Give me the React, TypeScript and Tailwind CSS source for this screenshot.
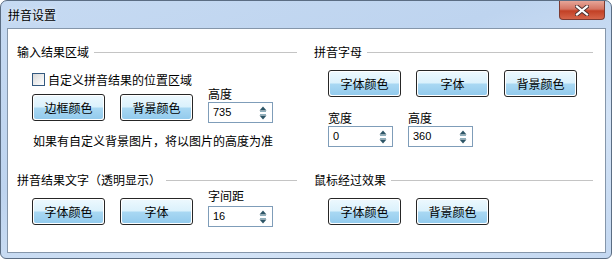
import React from 'react';

const cjk = { fontFamily: '"Noto Sans CJK SC", "Noto Sans", sans-serif' };

const WinButton: React.FC<{ label: string }> = ({ label }) => (
  <div className="w-[73px] h-[27px] shrink-0 rounded-[3px] border border-[#262626] bg-white p-px">
    <div className="flex h-full w-full items-center justify-center rounded-[2px] bg-[linear-gradient(to_bottom,#ecf8fe_0%,#daf1fc_48%,#a9d8f3_52%,#93cbed_100%)] text-[12px] leading-none text-black">
      {label}
    </div>
  </div>
);

const SpinBox: React.FC<{ value: string }> = ({ value }) => (
  <div className="flex h-[21px] w-[65px] items-center justify-between border border-[#7f9db9] bg-white pl-[4px] pr-[5px]">
    <span className="text-[11px] leading-none text-black" style={{ fontFamily: '"Liberation Sans", Arial, sans-serif' }}>
      {value}
    </span>
    <svg width="8" height="14" viewBox="0 0 8 14">
      <path d="M4 0.5 L7.5 4.5 L0.5 4.5 Z" fill="#2d5566" />
      <rect x="1" y="5" width="6" height="1" fill="#8fb0bd" />
      <rect x="1" y="8" width="6" height="1" fill="#8fb0bd" />
      <path d="M0.5 9.5 L7.5 9.5 L4 13.5 Z" fill="#2d5566" />
    </svg>
  </div>
);

const GroupHeader: React.FC<{ title: string }> = ({ title }) => (
  <div className="flex h-[14px] items-center">
    <span className="text-[12px] leading-[14px] text-black whitespace-nowrap">{title}</span>
    <div className="ml-[5px] h-px flex-1 bg-[#c4c4c4]" />
  </div>
);

export default function App() {
  return (
    <div className="h-[259px] w-[612px] bg-white" style={cjk}>
      <div className="flex h-[259px] w-[612px] flex-col rounded-t-[7px] rounded-b-[6px] border border-[#5b6d83] bg-[linear-gradient(160deg,#c6daf2_0%,#bed4ef_40%,#d3e3f6_70%,#c4d8f1_100%)]">
        {/* title bar */}
        <div className="flex h-[27px] items-start justify-between">
          <span className="ml-[7px] mt-[7px] text-[12px] leading-[14px] text-black [text-shadow:0_0_4px_#ffffff]">拼音设置</span>
          <div className="mr-[6px] flex h-[19px] w-[46px] items-center justify-center rounded-b-[4px] border border-t-0 border-[#7d3b32] bg-[linear-gradient(to_bottom,#e6a598_0%,#d47462_45%,#c24025_55%,#d6654a_100%)]">
            <svg width="14" height="11" viewBox="0 0 14 11">
              <path d="M2 1.5 L12 9.5 M12 1.5 L2 9.5" stroke="#4a3030" strokeWidth="4" strokeLinecap="square" />
              <path d="M2 1.5 L12 9.5 M12 1.5 L2 9.5" stroke="#ffffff" strokeWidth="2.2" strokeLinecap="square" />
            </svg>
          </div>
        </div>

        {/* client area */}
        <div className="ml-[6px] mr-[5px] h-[225px] border border-[#8596aa] bg-white pl-[9px] pt-[16px]">
          <div className="grid grid-cols-[280px_279px] grid-rows-[128px_auto] gap-x-[17px]">
            {/* 输入结果区域 */}
            <div className="flex flex-col">
              <GroupHeader title="输入结果区域" />
              <div className="flex flex-col pl-[15px]">
                <div className="mt-[14px] flex h-[13px] items-center">
                  <div className="h-[13px] w-[13px] border border-[#34597f] bg-[linear-gradient(135deg,#d8d8d8_0%,#f4f4f4_70%,#ffffff_100%)]" />
                  <span className="ml-[3px] text-[12px] leading-none text-black">自定义拼音结果的位置区域</span>
                </div>
                <div className="mt-[1px] flex items-start gap-[15px]">
                  <div className="mt-[7px]"><WinButton label="边框颜色" /></div>
                  <div className="mt-[7px]"><WinButton label="背景颜色" /></div>
                  <div className="flex flex-col">
                    <span className="text-[12px] leading-[14px] text-black">高度</span>
                    <div className="mt-[1px]"><SpinBox value="735" /></div>
                  </div>
                </div>
                <span className="mt-[11px] pl-px text-[12px] leading-[14px] text-black">如果有自定义背景图片，将以图片的高度为准</span>
              </div>
            </div>

            {/* 拼音字母 */}
            <div className="flex flex-col">
              <GroupHeader title="拼音字母" />
              <div className="flex flex-col pl-[14px]">
                <div className="mt-[11px] flex gap-[15px]">
                  <WinButton label="字体颜色" />
                  <WinButton label="字体" />
                  <WinButton label="背景颜色" />
                </div>
                <div className="mt-[14px] flex gap-[15px]">
                  <div className="flex flex-col">
                    <span className="text-[12px] leading-[14px] text-black">宽度</span>
                    <div className="mt-[1px]"><SpinBox value="0" /></div>
                  </div>
                  <div className="flex flex-col">
                    <span className="text-[12px] leading-[14px] text-black">高度</span>
                    <div className="mt-[1px]"><SpinBox value="360" /></div>
                  </div>
                </div>
              </div>
            </div>

            {/* 拼音结果文字 */}
            <div className="flex flex-col">
              <GroupHeader title="拼音结果文字（透明显示）" />
              <div className="mt-[2px] flex items-start gap-[15px] pl-[15px]">
                <div className="mt-[9px]"><WinButton label="字体颜色" /></div>
                <div className="mt-[9px]"><WinButton label="字体" /></div>
                <div className="flex flex-col">
                  <span className="text-[12px] leading-[14px] text-black">字间距</span>
                  <div className="mt-[3px]"><SpinBox value="16" /></div>
                </div>
              </div>
            </div>

            {/* 鼠标经过效果 */}
            <div className="flex flex-col">
              <GroupHeader title="鼠标经过效果" />
              <div className="mt-[11px] flex gap-[15px] pl-[14px]">
                <WinButton label="字体颜色" />
                <WinButton label="背景颜色" />
              </div>
            </div>
          </div>
        </div>
      </div>
    </div>
  );
}
